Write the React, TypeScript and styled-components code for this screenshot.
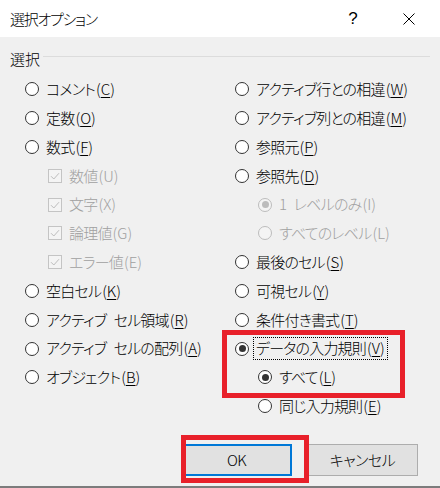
import { createGlobalStyle } from "styled-components";
import styled from "styled-components";

const GlobalStyle = createGlobalStyle`
  html, body {
    margin: 0;
    padding: 0;
    background: #f0f0f0;
  }

  body {
    font-family: "Noto Sans CJK JP", "Noto Sans", sans-serif;
    font-feature-settings: "palt" 1;
    font-weight: 300;
    color: #000;
  }
`;

const Dialog = styled.div`
  position: relative;
  display: flex;
  flex-direction: column;
  box-sizing: border-box;
  width: 440px;
  height: 488px;
  background: #f0f0f0;
  border-bottom: 2px solid #7c7c7c;
  overflow: hidden;
`;

const TitleBar = styled.div`
  display: flex;
  align-items: center;
  height: 37px;
  padding: 0 8px 0 10px;
  background: #fff;
`;

const Title = styled.div`
  flex: 1;
  font-size: 15px;
  letter-spacing: -1.3px;
`;

const CaptionButton = styled.div`
  display: flex;
  align-items: center;
  justify-content: center;
  width: 46px;
  height: 37px;
  font-family: "Liberation Sans", sans-serif;
  font-size: 17px;

  & + & {
    margin-left: 10px;
  }
`;

const Body = styled.div`
  padding: 10px 10px 0 10px;
`;

const GroupHeader = styled.div`
  display: flex;
  align-items: center;
  gap: 3px;
  height: 22px;
  font-size: 15px;

  hr {
    flex: 1;
    height: 1px;
    margin: 0 0 3px 0;
    border: none;
    background: #dcdcdc;
  }
`;

const Columns = styled.div`
  display: grid;
  grid-template-columns: 210px 1fr;
  margin-top: 6px;
  padding-left: 15px;
`;

const Column = styled.div`
  display: flex;
  flex-direction: column;
`;

const Row = styled.div<{ $indent?: boolean; $disabled?: boolean }>`
  display: flex;
  align-items: center;
  gap: 7px;
  height: 28.8px;
  padding-left: ${(p) => (p.$indent ? "23px" : "0")};
  color: ${(p) => (p.$disabled ? "#a0a0a0" : "#000")};
`;

const Label = styled.span<{ $focus?: boolean }>`
  font-size: 15px;
  line-height: 1.1;
  white-space: nowrap;
  outline: ${(p) => (p.$focus ? "1px dotted #000" : "none")};
  outline-offset: 2px;

  .jp {
    letter-spacing: -0.8px;
    word-spacing: 5px;
  }

  .key {
    margin-left: 1px;
  }

  u {
    text-decoration-thickness: 1px;
    text-underline-offset: 2px;
  }
`;

const Radio = styled.span<{ $checked?: boolean; $disabled?: boolean }>`
  position: relative;
  flex: none;
  box-sizing: border-box;
  width: 14px;
  height: 14px;
  border-radius: 50%;
  border: 1px solid ${(p) => (p.$disabled ? "#bcbcbc" : "#333")};
  background: ${(p) => (p.$disabled ? "#f4f4f4" : "#fff")};

  &::after {
    content: "";
    display: ${(p) => (p.$checked ? "block" : "none")};
    position: absolute;
    inset: 2.5px;
    border-radius: 50%;
    background: ${(p) => (p.$disabled ? "#bcbcbc" : "#333")};
  }
`;

const Check = styled.span`
  display: flex;
  flex: none;
  box-sizing: border-box;
  width: 14px;
  height: 14px;
  border: 1px solid #c4c4c4;
  background: #f4f4f4;
`;

const Footer = styled.div`
  display: flex;
  justify-content: flex-end;
  gap: 15px;
  margin-top: 23px;
  padding-right: 12px;
`;

const Button = styled.div<{ $default?: boolean }>`
  display: flex;
  align-items: center;
  justify-content: center;
  box-sizing: border-box;
  width: 111px;
  height: 32px;
  background: #e1e1e1;
  border: ${(p) => (p.$default ? "2px solid #0078d7" : "1px solid #adadad")};
  font-size: 15px;
  letter-spacing: -0.5px;
`;

const Marker = styled.div`
  position: absolute;
  box-sizing: border-box;
  border: 5px solid #e8202a;
  pointer-events: none;
`;

type Opt = {
  text: string;
  key: string;
  kind?: "radio" | "check";
  checked?: boolean;
  disabled?: boolean;
  indent?: boolean;
  focus?: boolean;
};

const left: Opt[] = [
  { text: "コメント", key: "C" },
  { text: "定数", key: "O" },
  { text: "数式", key: "F" },
  { text: "数値", key: "U", kind: "check", checked: true, disabled: true, indent: true },
  { text: "文字", key: "X", kind: "check", checked: true, disabled: true, indent: true },
  { text: "論理値", key: "G", kind: "check", checked: true, disabled: true, indent: true },
  { text: "エラー値", key: "E", kind: "check", checked: true, disabled: true, indent: true },
  { text: "空白セル", key: "K" },
  { text: "アクティブ セル領域", key: "R" },
  { text: "アクティブ セルの配列", key: "A" },
  { text: "オブジェクト", key: "B" },
];

const right: Opt[] = [
  { text: "アクティブ行との相違", key: "W" },
  { text: "アクティブ列との相違", key: "M" },
  { text: "参照元", key: "P" },
  { text: "参照先", key: "D" },
  { text: "1 レベルのみ", key: "I", checked: true, disabled: true, indent: true },
  { text: "すべてのレベル", key: "L", disabled: true, indent: true },
  { text: "最後のセル", key: "S" },
  { text: "可視セル", key: "Y" },
  { text: "条件付き書式", key: "T" },
  { text: "データの入力規則", key: "V", checked: true, focus: true },
  { text: "すべて", key: "L", checked: true, indent: true },
  { text: "同じ入力規則", key: "E", indent: true },
];

function Option({ o }: { o: Opt }) {
  return (
    <Row $indent={o.indent} $disabled={o.disabled}>
      {o.kind === "check" ? (
        <Check>
          <svg width="12" height="12" viewBox="0 0 12 12">
            <path d="M2 6.2 L4.8 9 L10 3.2" fill="none" stroke="#bdbdbd" strokeWidth="1" />
          </svg>
        </Check>
      ) : (
        <Radio $checked={o.checked} $disabled={o.disabled} />
      )}
      <Label $focus={o.focus}>
        <span className="jp">{o.text}</span>
        <span className="key">
          ({o.disabled ? o.key : <u>{o.key}</u>})
        </span>
      </Label>
    </Row>
  );
}

export default function App() {
  return (
    <>
      <GlobalStyle />
      <Dialog>
        <TitleBar>
          <Title>選択オプション</Title>
          <CaptionButton>?</CaptionButton>
          <CaptionButton>
            <svg width="12" height="12" viewBox="0 0 12 12">
              <path d="M0.5 0.5 L11.5 11.5 M11.5 0.5 L0.5 11.5" stroke="#000" strokeWidth="1" />
            </svg>
          </CaptionButton>
        </TitleBar>
        <Body>
          <GroupHeader>
            <span>選択</span>
            <hr />
          </GroupHeader>
          <Columns>
            <Column>
              {left.map((o) => (
                <Option key={o.text} o={o} />
              ))}
            </Column>
            <Column>
              {right.map((o) => (
                <Option key={o.text} o={o} />
              ))}
            </Column>
          </Columns>
          <Footer>
            <Button $default>OK</Button>
            <Button>キャンセル</Button>
          </Footer>
        </Body>
        <Marker style={{ left: 222, top: 330, width: 183, height: 68 }} />
        <Marker style={{ left: 181, top: 435, width: 128, height: 48 }} />
      </Dialog>
    </>
  );
}
